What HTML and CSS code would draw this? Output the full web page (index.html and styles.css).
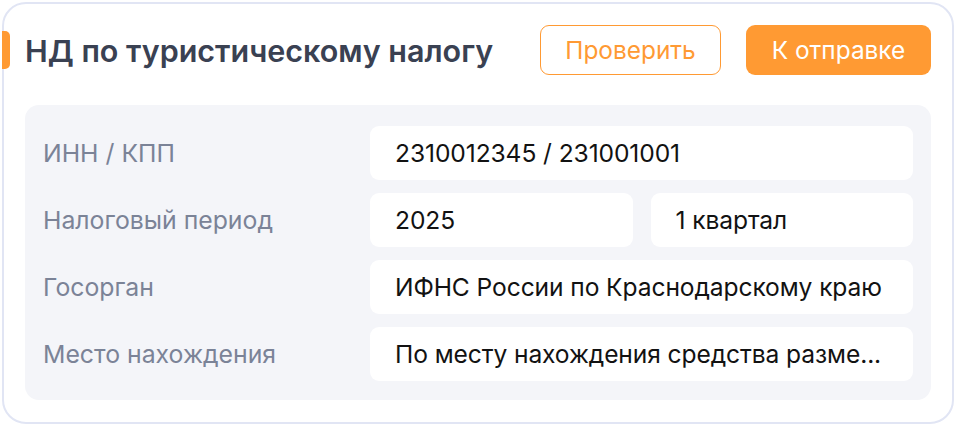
FILE: index.html
```html
<!DOCTYPE html>
<html lang="ru">
<head>
<meta charset="utf-8">
<link rel="stylesheet" href="styles.css">
</head>
<body>
<div class="card">
  <div class="header">
    <h1 class="title">НД по туристическому налогу</h1>
    <div class="actions">
      <button class="btn btn-outline">Проверить</button>
      <button class="btn btn-fill">К отправке</button>
    </div>
  </div>
  <div class="panel">
    <div class="row">
      <div class="label">ИНН / КПП</div>
      <div class="fields"><div class="field">2310012345 / 231001001</div></div>
    </div>
    <div class="row">
      <div class="label">Налоговый период</div>
      <div class="fields two"><div class="field">2025</div><div class="field">1 квартал</div></div>
    </div>
    <div class="row">
      <div class="label">Госорган</div>
      <div class="fields"><div class="field">ИФНС России по Краснодарскому краю</div></div>
    </div>
    <div class="row">
      <div class="label">Место нахождения</div>
      <div class="fields"><div class="field" title="По месту нахождения средства размещения">По месту нахождения средства разме...</div></div>
    </div>
  </div>
</div>
</body>
</html>
```
FILE: styles.css
```css
html, body { margin: 0; padding: 0; background: #fff; }
body { font-family: Inter, "Noto Sans", sans-serif; }
.card {
  position: relative;
  margin: 2px;
  width: 952px;
  height: 422px;
  box-sizing: border-box;
  border: 2px solid #e1e5f4;
  border-radius: 24px;
  padding: 21px 21px 22px 21px;
  background: #fff;
}
.card::before {
  content: "";
  position: absolute;
  left: -2px;
  top: 27px;
  width: 8px;
  height: 38px;
  background: #ff9a33;
  border-radius: 0 5px 5px 0;
}
.header {
  display: flex;
  align-items: center;
  justify-content: space-between;
  height: 50px;
}
.title {
  margin: 0;
  font-size: 30.5px;
  font-weight: 600;
  color: #3a4152;
}
.actions { display: flex; gap: 25px; }
.btn {
  height: 50px;
  box-sizing: border-box;
  border-radius: 9px;
  font-family: inherit;
  font-size: 24.4px;
  font-weight: 400;
  padding: 0;
  cursor: pointer;
}
.btn-outline {
  width: 181px;
  border: 1.5px solid #ff9a33;
  background: #fff;
  color: #ff9a33;
}
.btn-fill {
  width: 185px;
  border: none;
  background: #ff9a33;
  color: #fff;
}
.panel {
  margin-top: 30px;
  background: #f4f5f9;
  border-radius: 14px;
  padding: 21px 18px 19px 18px;
  display: flex;
  flex-direction: column;
  gap: 13px;
}
.row {
  display: grid;
  grid-template-columns: 327px minmax(0, 1fr);
  align-items: center;
}
.label {
  font-size: 24.8px;
  color: #7b8397;
}
.fields { display: flex; gap: 18px; min-width: 0; }
.field {
  flex: 1 1 0;
  min-width: 0;
  height: 54px;
  box-sizing: border-box;
  background: #fff;
  border-radius: 9px;
  padding: 0 25px;
  display: block;
  line-height: 54px;
  font-size: 24.6px;
  letter-spacing: -0.1px;
  color: #121212;
  white-space: nowrap;
  overflow: hidden;
  text-overflow: ellipsis;
}
```
